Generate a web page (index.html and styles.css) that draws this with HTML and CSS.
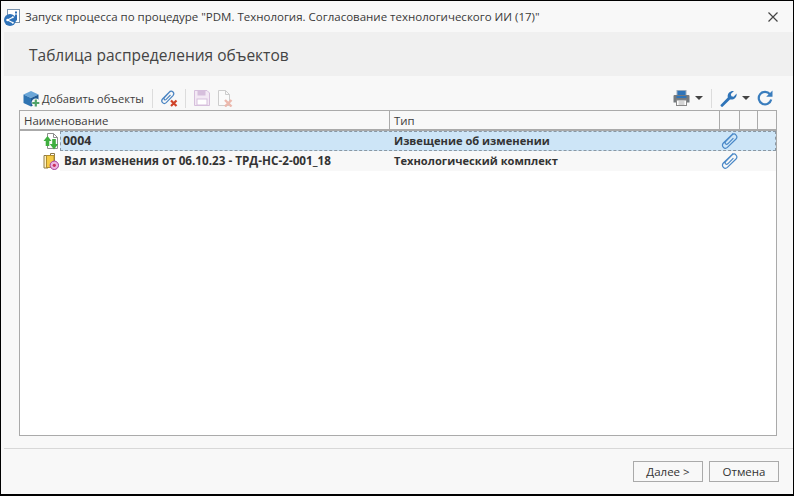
FILE: index.html
```html
<!DOCTYPE html>
<html lang="ru">
<head>
<meta charset="utf-8">
<title>Запуск процесса</title>
<link rel="stylesheet" href="styles.css">
</head>
<body>
<div class="window">
  <div class="titlebar">
    <svg class="app-icon" width="17" height="17" viewBox="0 0 17 17"><rect x="3.5" y="0.5" width="12" height="13" fill="#fff" stroke="#7a93ad"/><rect x="11" y="2.5" width="2" height="2" fill="#2f6fb5"/><rect x="11" y="5.5" width="2" height="6" fill="#2f6fb5"/><circle cx="6" cy="11" r="6" fill="#2f72b8"/><path d="M8.8 8.2 L3.6 11 L8.8 13.8" fill="none" stroke="#fff" stroke-width="1.2"/><circle cx="3.6" cy="11" r="1.3" fill="#fff"/><circle cx="8.8" cy="8.2" r="1" fill="#fff"/><circle cx="8.8" cy="13.8" r="1" fill="#fff"/></svg>
    <span class="title-text">Запуск процесса по процедуре "PDM. Технология. Согласование технологического ИИ (17)"</span>
    <svg class="close" width="10" height="10" viewBox="0 0 10 10"><path d="M0.5 0.5 L9.5 9.5 M9.5 0.5 L0.5 9.5" stroke="#444" stroke-width="1.2"/></svg>
  </div>
  <div class="band">Таблица распределения объектов</div>
  <div class="content">
    <div class="toolbar">
      <svg class="ic" width="17" height="17" viewBox="0 0 17 17"><path d="M0.5 4.5 L8 1 L15.5 4.5 L8 8 Z" fill="#6aa6d8"/><path d="M0.5 4.5 L8 8 V16.5 L0.5 13 Z" fill="#2f74b2"/><path d="M15.5 4.5 L8 8 V16.5 L15.5 13 Z" fill="#1f5a94"/><circle cx="12.8" cy="12.8" r="4.2" fill="#f8f8f8"/><path d="M12.8 9.5 V16.5 M9.3 13 H16.3" stroke="#4fa268" stroke-width="2.2"/></svg>
      <span class="tb-label">Добавить объекты</span>
      <span class="tb-sep"></span>
      <svg class="ic" width="18" height="18" viewBox="0 0 18 18"><path d="M10.5 2 L2.5 10 C0.3 12.6 3.6 16 6.2 13.6 L13 6.6 C15.2 4 12 0.8 9.5 3 L4.4 8.6 C3.2 10.2 4.8 11.6 6.2 10.4 L10.5 6" fill="none" stroke="#4a84c2" stroke-width="1.2"/><path d="M11 11.5 L16.5 17 M16.5 11.5 L11 17" stroke="#cf4228" stroke-width="2.2"/></svg>
      <span class="tb-sep tb-sep-b"></span>
      <svg class="ic" width="16" height="16" viewBox="0 0 16 16"><path d="M0.5 0.5 H13 L15.5 3 V15.5 H0.5 Z" fill="#f3e9f4" stroke="#d6bfdc"/><rect x="3.5" y="1" width="8" height="4.5" fill="#d6bfdc"/><rect x="3" y="9" width="10" height="6" fill="#fff" stroke="#d6bfdc"/></svg>
      <svg class="ic ic-del" width="16" height="17" viewBox="0 0 16 17"><path d="M0.5 0.5 H7.5 L11.5 4.5 V15.5 H0.5 Z M7.5 0.5 V4.5 H11.5" fill="#fbfbfb" stroke="#cdcdcd"/><path d="M7 10 L13.5 16.5 M13.5 10 L7 16.5" stroke="#ecb9ae" stroke-width="2.4"/></svg>
      <span class="spacer"></span>
      <svg class="ic" width="17" height="16" viewBox="0 0 17 16"><rect x="4" y="0.5" width="9" height="6" fill="#2f74b8" stroke="#9ab"/><path d="M1.5 5 H15.5 A1 1 0 0 1 16.5 6 V12.5 H0.5 V6 A1 1 0 0 1 1.5 5 Z" fill="#757a7e"/><rect x="3.5" y="6" width="10" height="2" fill="#2f74b8"/><rect x="3.5" y="10" width="10" height="5.5" fill="#fff" stroke="#888"/><path d="M5.5 12 H11.5 M5.5 14 H11.5" stroke="#aaa"/></svg>
      <span class="caret caret-print"></span>
      <span class="tb-sep tb-sep-r"></span>
      <svg class="ic" width="17" height="17" viewBox="0 0 17 17"><path d="M0.5 15 L7.8 7.4 C7 3.6 10 0.4 14 1 L10.8 4 L11.4 6.2 L13.6 6.8 L16.6 3.6 C17 7.6 13.6 10.4 10 9.4 L2.6 16.8 C1.6 17.2 0.2 16 0.5 15 Z" fill="#2f74b8"/></svg>
      <span class="caret caret-wrench"></span>
      <svg class="ic" width="16" height="16" viewBox="0 0 16 16"><path d="M13 4.2 A6.3 6.3 0 1 0 14.2 9.6" fill="none" stroke="#3a7dbd" stroke-width="2.2"/><path d="M15.5 0.5 V6.8 H9.2 Z" fill="#3a7dbd"/></svg>
    </div>
    <div class="grid">
      <div class="row head">
        <div class="c c-name">Наименование</div>
        <div class="c c-type">Тип</div>
        <div class="c c-a"></div>
        <div class="c c-b"></div>
        <div class="c c-d"></div>
      </div>
      <div class="row data selected">
        <svg class="row-icon" width="16" height="17" viewBox="0 0 16 17"><path d="M4.5 0.5 H10.5 L14.5 4.5 V15.5 H4.5 Z M10.5 0.5 V4.5 H14.5" fill="#fff" stroke="#8e8e8e"/><path d="M4.5 3 L8.5 8 H6.3 V13 H2.7 V8 H0.5 Z" fill="#3fae3f"/><path d="M11 16.5 L6.8 11 H9.2 V6 H12.8 V11 H15.2 Z" fill="#3fae3f"/></svg>
        <div class="cell-name sel-cell">0004</div>
        <div class="cell-type">Извещение об изменении</div>
        <svg class="clip" width="17" height="18" viewBox="0 0 17 18"><path d="M12 1.6 L2.4 11 C-0.2 14 3.6 18 6.4 15.4 L15 7 C17.4 4.4 14 0.4 11.2 2.8 L4.6 9.6 C3.2 11.4 5.2 13.2 6.8 11.8 L12.4 6.2" fill="none" stroke="#4a88c7" stroke-width="1.2"/></svg>
      </div>
      <div class="row data alt">
        <svg class="row-icon" width="16" height="17" viewBox="0 0 16 17"><path d="M1 2.5 H5 V15 H1 Z" fill="#fdf2c4" stroke="#8d7a4a"/><path d="M7.5 0.5 H11.5 V9 H7.5 Z" fill="#fff" stroke="#8d7a4a"/><rect x="3.5" y="2.5" width="7.5" height="12" fill="#f6cb45" stroke="#b08d30"/><circle cx="11.3" cy="12.3" r="4.2" fill="#edb4e0" stroke="#a63f9e"/><circle cx="11.3" cy="12.3" r="1.6" fill="#c9305a"/></svg>
        <div class="cell-name">Вал изменения от 06.10.23 - ТРД-НС-2-001_18</div>
        <div class="cell-type">Технологический комплект</div>
        <svg class="clip" width="17" height="18" viewBox="0 0 17 18"><path d="M12 1.6 L2.4 11 C-0.2 14 3.6 18 6.4 15.4 L15 7 C17.4 4.4 14 0.4 11.2 2.8 L4.6 9.6 C3.2 11.4 5.2 13.2 6.8 11.8 L12.4 6.2" fill="none" stroke="#4a88c7" stroke-width="1.2"/></svg>
      </div>
    </div>
  </div>
  <div class="footer">
    <button class="btn">Далее &gt;</button>
    <button class="btn">Отмена</button>
  </div>
</div>
</body>
</html>
```

FILE: styles.css
```css
* { box-sizing: border-box; }
html, body { margin: 0; padding: 0; }
body {
  width: 794px;
  height: 496px;
  overflow: hidden;
  font-family: "Open Sans", "Noto Sans", sans-serif;
  color: #333;
}
.window {
  width: 794px;
  height: 496px;
  display: flex;
  flex-direction: column;
  background: #f8f8f8;
  border-style: solid;
  border-color: #000;
  border-width: 1px 1px 2px 1px;
}
.titlebar {
  height: 31px;
  flex: none;
  display: flex;
  align-items: center;
  padding: 0 15px 0 3px;
  font-size: 11.5px;
  color: #3a3a3a;
}
.app-icon { flex: none; margin-top: 1px; }
.title-text { margin-left: 4px; }
.close { margin-left: auto; }
.band {
  flex: none;
  height: 44px;
  margin-left: 3px;
  padding: 2px 0 0 25px;
  background: #f0f0f0;
  display: flex;
  align-items: center;
  font-size: 15.5px;
  color: #444;
}
.content {
  flex: 1;
  min-height: 0;
  padding: 10px 16px 0 18px;
  display: flex;
  flex-direction: column;
}
.toolbar {
  height: 24px;
  flex: none;
  display: flex;
  align-items: center;
  padding: 0 4px 0 4px;
}
.ic { flex: none; }
.tb-label { font-size: 11.1px; margin-left: 2px; color: #3c3c3c; }
.tb-sep { width: 1px; height: 19px; background: #dcdcdc; margin: 0 7px 0 8px; flex: none; }
.tb-sep-b { margin: 0 8px 0 7px; }
.tb-sep-r { margin: 0 8px 0 8px; }
.ic-del { margin-left: 8px; }
.spacer { flex: 1; }
.caret {
  width: 0;
  height: 0;
  border-left: 4px solid transparent;
  border-right: 4px solid transparent;
  border-top: 4px solid #444;
  margin-left: 5px;
  flex: none;
}
.caret-wrench { margin-right: 7px; margin-left: 5px; }
.grid {
  flex: 1;
  background: #fff;
  border: 1px solid #aaa;
  min-height: 0;
}
.row { display: flex; align-items: center; position: relative; }
.head {
  height: 20px;
  background: #f8f8f8;
  border-bottom: 2px solid #aaa;
  font-size: 11.4px;
  color: #3c3c3c;
}
.c { height: 100%; display: flex; align-items: center; padding-left: 4px; border-right: 1px solid #aaa; flex: none; }
.c-name { width: 370px; }
.c-type { width: 330px; }
.c-a { width: 20px; }
.c-b { width: 18px; }
.c-d { flex: 1; border-right: 0; }
.data { height: 20px; font-size: 11.15px; font-weight: 700; color: #333; }
.alt { background: linear-gradient(#f8f8f8, #f8f8f8) 40px 0 / 100% 100% no-repeat; }
.selected { background: linear-gradient(#cde5f7, #cde5f7) 40px 0 / 100% 100% no-repeat; }
.row-icon { position: absolute; left: 23px; top: 2px; }
.cell-name { width: 330px; margin-left: 40px; padding: 0 0 2px 4px; white-space: nowrap; flex: none; height: 100%; display: flex; align-items: center; font-size: 11.7px; }
.sel-cell { padding-left: 3px; font-size: 12.4px; }
.cell-type { width: 330px; padding: 0 0 2px 4px; flex: none; white-space: nowrap; height: 100%; display: flex; align-items: center; }
.clip { flex: none; margin-left: 1px; }
.selected::after {
  content: "";
  position: absolute;
  left: 40px;
  right: 0;
  top: 0;
  bottom: 0;
  border: 1px dashed #8a98a4;
}
.footer {
  flex: none;
  height: 46px;
  margin: 12px 0 0 3px;
  border-top: 1px solid #d8d8d8;
  display: flex;
  justify-content: flex-end;
  align-items: flex-start;
  padding: 12px 14px 0 0;
  gap: 6px;
}
.btn {
  width: 70px;
  height: 21px;
  background: #f8f8f8;
  border: 1px solid #aaa;
  font-family: inherit;
  font-size: 11.5px;
  color: #333;
  padding: 0;
}
```
